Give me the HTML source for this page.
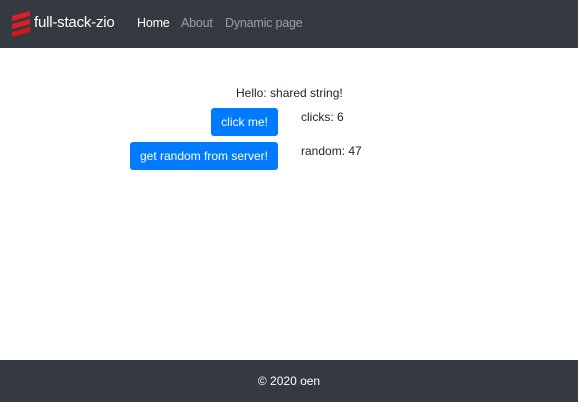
<!DOCTYPE html>
<html><head><meta charset="utf-8"><style>
body{margin:0;width:578px;height:402px;position:relative;font-family:"Liberation Sans",sans-serif;background:#fff;overflow:hidden}
.nav{position:absolute;left:0;top:0;width:578px;height:48px;background:#343a40}
.brand{position:absolute;left:34px;top:14px;color:#fff;font-size:15px;letter-spacing:-0.2px}
.nl{position:absolute;top:16px;font-size:12.5px;letter-spacing:-0.2px;color:rgba(255,255,255,.5)}
.foot{position:absolute;left:0;top:360px;width:578px;height:42px;background:#343a40;color:#fff;font-size:12px;text-align:center;line-height:42px}
.t{position:absolute;font-size:12px;color:#212529}
.btn{position:absolute;background:#007bff;color:#fff;font-size:12px;border-radius:3px;text-align:center;line-height:28px;height:28px}
</style></head><body>
<div class="nav">
<svg style="position:absolute;left:11px;top:10px" width="20" height="28" viewBox="0 0 20 28">
<path d="M1 6 L19 1 L19 6 L1 11Z" fill="#e02020"/>
<path d="M1 14 L19 9 L19 14 L1 19Z" fill="#e02020"/>
<path d="M1 22 L19 17 L19 22 L1 27Z" fill="#d01818"/>
</svg>
<div class="brand">full-stack-zio</div>
<div class="nl" style="left:137px;color:#fff">Home</div>
<div class="nl" style="left:181px">About</div>
<div class="nl" style="left:225px">Dynamic page</div>
</div>
<div class="t" style="left:236px;top:86px">Hello: shared string!</div>
<div class="btn" style="left:211px;top:108px;width:67px">click me!</div>
<div class="t" style="left:301px;top:110px">clicks: 6</div>
<div class="btn" style="left:130px;top:142px;width:148px">get random from server!</div>
<div class="t" style="left:301px;top:144px">random: 47</div>
<div class="foot">© 2020 oen</div>
</body></html>
